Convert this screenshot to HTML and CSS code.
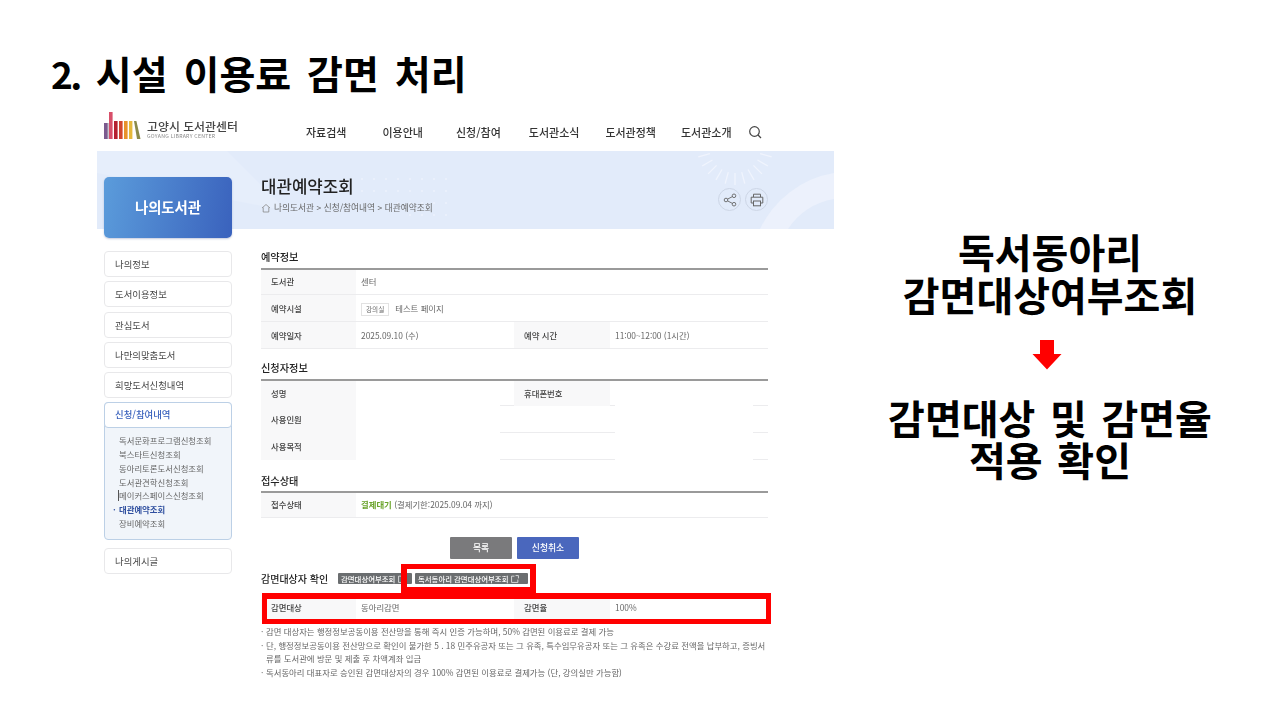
FILE: index.html
```html
<!DOCTYPE html>
<html lang="ko">
<head>
<meta charset="utf-8">
<title>시설 이용료 감면 처리</title>
<link rel="stylesheet" href="styles.css">
</head>
<body>
<div class="slide">
  <h1 class="slide-title"><span class="num">2.</span> 시설 이용료 감면 처리</h1>
  <div class="slide-main">
    <div class="shot">
      <div class="shot-inner">
        <header class="site-head">
          <div class="logo">
            <svg class="logo-mark" width="37" height="28" viewBox="0 0 37 28">
              <rect x="0" y="11" width="3" height="16" fill="#7b5a8f"/>
              <rect x="3" y="11" width="1.5" height="16" fill="#9a8aa5"/>
              <rect x="5" y="0" width="3.6" height="27" fill="#d8506a"/>
              <rect x="10" y="9" width="3.6" height="18" fill="#b5202f"/>
              <rect x="15" y="9" width="3.6" height="18" fill="#d2452f"/>
              <rect x="20" y="9" width="3.6" height="18" fill="#e8912c"/>
              <rect x="25" y="9" width="3.4" height="18" fill="#e6b93a"/>
              <polygon points="30,9 32.4,9 36.5,27 33,27" fill="#8a8a4a"/>
            </svg>
            <div class="logo-text">
              <div class="logo-ko">고양시 도서관센터</div>
              <div class="logo-en">GOYANG LIBRARY CENTER</div>
            </div>
          </div>
          <nav class="gnb">
            <span class="gnb-a">자료검색</span>
            <span class="gnb-b">이용안내</span>
            <span class="gnb-c">신청/참여</span>
            <span class="gnb-d">도서관소식</span>
            <span class="gnb-e">도서관정책</span>
            <span class="gnb-f">도서관소개</span>
            <svg class="gnb-search" width="14" height="14" viewBox="0 0 14 14" fill="none" stroke="#444" stroke-width="1.2"><circle cx="6.5" cy="6.5" r="4.8"/><path d="M10 10l3 3"/></svg>
          </nav>
        </header>

        <div class="banner">
          <svg class="banner-deco" width="737" height="78" viewBox="0 0 737 78">
            <polygon points="0,0 0,22 190,60 130,0" fill="#e6eefb"/>
            <g fill="#edf2fc">
              <circle cx="265" cy="28" r="1"/><circle cx="277" cy="28" r="1"/><circle cx="289" cy="28" r="1"/><circle cx="301" cy="28" r="1"/><circle cx="313" cy="28" r="1"/><circle cx="325" cy="28" r="1"/><circle cx="337" cy="28" r="1"/><circle cx="349" cy="28" r="1"/>
              <circle cx="265" cy="40" r="1"/><circle cx="277" cy="40" r="1"/><circle cx="289" cy="40" r="1"/><circle cx="301" cy="40" r="1"/><circle cx="313" cy="40" r="1"/><circle cx="325" cy="40" r="1"/><circle cx="337" cy="40" r="1"/><circle cx="349" cy="40" r="1"/>
              <circle cx="301" cy="52" r="1"/><circle cx="313" cy="52" r="1"/><circle cx="325" cy="52" r="1"/><circle cx="337" cy="52" r="1"/><circle cx="349" cy="52" r="1"/>
              <circle cx="313" cy="64" r="1"/><circle cx="325" cy="64" r="1"/><circle cx="337" cy="64" r="1"/><circle cx="349" cy="64" r="1"/>
            </g>
            <path stroke="#f0f4fd" stroke-width="1.3" d="M663.1 2.7L674.7 5.8M660.5 9L670.9 15M656.4 14.4L664.9 22.9M651 18.5L657 28.9M644.7 21.1L647.8 32.7M638 22L638 34M631.3 21.1L628.2 32.7M625 18.5L619 28.9M619.6 14.4L611.1 22.9M615.5 9L605.1 15M612.9 2.7L601.3 5.8"/>
            <path d="M737 22a100 100 0 0 0-74 56h28a70 70 0 0 1 46-30z" fill="#ecf1fc"/>
          </svg>
          <div class="banner-body">
            <h2 class="page-title">대관예약조회</h2>
            <div class="crumb">
              <svg width="10" height="10" viewBox="0 0 10 10" fill="none" stroke="#888" stroke-width=".8"><path d="M1 5l4-3.5L9 5M2.2 4.5V9h5.6V4.5"/></svg>
              <span>나의도서관 &gt; 신청/참여내역 &gt; 대관예약조회</span>
            </div>
          </div>
          <div class="banner-tools">
            <span class="tool">
              <svg width="14" height="14" viewBox="0 0 14 14" fill="none" stroke="#666" stroke-width=".9"><circle cx="3" cy="7" r="1.8"/><circle cx="11" cy="2.8" r="1.8"/><circle cx="11" cy="11.2" r="1.8"/><path d="M4.6 6.1l4.8-2.5M4.6 7.9l4.8 2.5"/></svg>
            </span>
            <span class="tool">
              <svg width="14" height="14" viewBox="0 0 14 14" fill="none" stroke="#666" stroke-width="1"><path d="M3.5 4V1.2h7V4M3.5 10H1.2V4.2h11.6V10h-2.3"/><rect x="3.5" y="8" width="7" height="4.8"/></svg>
            </span>
          </div>
        </div>

        <div class="site-body">
          <aside class="side">
            <div class="side-head">나의도서관</div>
            <ul class="side-menu">
              <li class="side-item">나의정보</li>
              <li class="side-item">도서이용정보</li>
              <li class="side-item">관심도서</li>
              <li class="side-item">나만의맞춤도서</li>
              <li class="side-item">희망도서신청내역</li>
              <li class="side-group">
                <div class="side-item is-open">신청/참여내역</div>
                <ul class="side-sub">
                  <li>독서문화프로그램신청조회</li>
                  <li>북스타트신청조회</li>
                  <li>동아리토론도서신청조회</li>
                  <li>도서관견학신청조회</li>
                  <li><span class="caret"></span>메이커스페이스신청조회</li>
                  <li class="is-current">대관예약조회</li>
                  <li>장비예약조회</li>
                </ul>
              </li>
              <li class="side-item">나의게시글</li>
            </ul>
          </aside>

          <main class="content">
            <h3 class="sec first">예약정보</h3>
            <div class="tbl">
              <div class="row"><div class="th">도서관</div><div class="td wide">센터</div></div>
              <div class="row"><div class="th">예약시설</div><div class="td wide"><span class="tag">강의실</span>테스트 페이지</div></div>
              <div class="row"><div class="th">예약일자</div><div class="td">2025.09.10 (수)</div><div class="th">예약 시간</div><div class="td">11:00~12:00 (1시간)</div></div>
            </div>

            <h3 class="sec">신청자정보</h3>
            <div class="tbl tbl-people">
              <div class="row"><div class="th">성명</div><div class="td"></div><div class="th">휴대폰번호</div><div class="td"></div></div>
              <div class="row"><div class="th">사용인원</div><div class="td wide"></div></div>
              <div class="row"><div class="th">사용목적</div><div class="td wide"></div></div>
              <div class="mask mask-a"></div>
              <div class="mask mask-b"></div>
            </div>

            <h3 class="sec third">접수상태</h3>
            <div class="tbl">
              <div class="row"><div class="th">접수상태</div><div class="td wide"><b class="ok">결제대기</b> (결제기한:2025.09.04 까지)</div></div>
            </div>

            <div class="btns">
              <span class="btn btn-gray">목록</span>
              <span class="btn btn-blue">신청취소</span>
            </div>

            <div class="check">
              <h3 class="check-title">감면대상자 확인</h3>
              <span class="badge badge-a">감면대상여부조회
                <svg width="8" height="8" viewBox="0 0 7 7" fill="none" stroke="#eee" stroke-width=".7"><path d="M3 1H.5v5.5H6V4M4 .5h2.5V3"/></svg>
              </span>
              <span class="badge badge-b">독서동아리 감면대상여부조회
                <svg width="8" height="8" viewBox="0 0 7 7" fill="none" stroke="#eee" stroke-width=".7"><path d="M3 1H.5v5.5H6V4M4 .5h2.5V3"/></svg>
              </span>
            </div>
            <div class="tbl tbl-plain">
              <div class="row"><div class="th">감면대상</div><div class="td">동아리감면</div><div class="th">감면율</div><div class="td">100%</div></div>
            </div>

            <ul class="notes">
              <li>감면 대상자는 행정정보공동이용 전산망을 통해 즉시 인증 가능하며, 50% 감면된 이용료로 결제 가능</li>
              <li>단, 행정정보공동이용 전산망으로 확인이 불가한 5 . 18 민주유공자 또는 그 유족, 특수임무유공자 또는 그 유족은 수강료 전액을 납부하고, 증빙서류를 도서관에 방문 및 제출 후 차액계좌 입금</li>
              <li>독서동아리 대표자로 승인된 감면대상자의 경우 100% 감면된 이용료로 결제가능 (단, 강의실만 가능함)</li>
            </ul>
          </main>
        </div>
      </div>
      <div class="red red-a"></div>
      <div class="red red-b"></div>
    </div>

    <aside class="callout">
      <p class="callout-text">독서동아리<br>감면대상여부조회</p>
      <svg class="callout-arrow" width="30" height="30" viewBox="0 0 30 30"><polygon points="8,0 22,0 22,14 29.5,14 15,29.5 .5,14 8,14" fill="#f00"/></svg>
      <p class="callout-text spaced">감면대상 및 감면율<br>적용 확인</p>
    </aside>
  </div>
</div>
</body>
</html>
```
FILE: styles.css
```css
* { box-sizing: border-box; }
html, body { margin: 0; padding: 0; background: #fff; }
body { font-family: "Noto Sans CJK KR", "Noto Sans", sans-serif; color: #000; }
ul { list-style: none; margin: 0; padding: 0; }
h1, h2, h3, p { margin: 0; }

.slide { width: 1280px; height: 720px; overflow: hidden; background: #fff; }
.slide-title {
  height: 105px; padding: 47px 0 0 51px;
  font-size: 39px; line-height: 50px; font-weight: 700; word-spacing: 5px; white-space: nowrap;
}
.num { letter-spacing: -2.5px; font-size: 37px; }
.slide-main { display: flex; padding-left: 97px; }

/* embedded screenshot */
.shot { position: relative; width: 737px; flex: none; }
.shot-inner { filter: blur(.35px); }

.site-head { height: 46px; display: flex; position: relative; }
.logo { width: 209px; padding: 7px 0 0 7px; display: flex; gap: 6px; flex: none; }
.logo-mark { flex: none; }
.logo-text { padding-top: 7px; }
.logo-ko { font-size: 11.9px; line-height: 14px; font-weight: 500; color: #444; white-space: nowrap; }
.logo-en { font-size: 5.2px; line-height: 6px; color: #888; letter-spacing: .25px; white-space: nowrap; }
.gnb { display: flex; align-items: center; padding-top: 8px; font-size: 11px; font-weight: 500; color: #333; white-space: nowrap; line-height: 38px; height: 46px; }
.gnb-b { margin-left: 36px; }
.gnb-c { margin-left: 33px; }
.gnb-d { margin-left: 28px; }
.gnb-e { margin-left: 26px; }
.gnb-f { margin-left: 25px; }
.gnb-search { margin-left: 16px; flex: none; }

.banner { position: relative; height: 78px; background: #e2ebfa; padding: 24px 0 0 164px; display: flex; }
.banner-deco { position: absolute; left: 0; top: 0; }
.banner-body { position: relative; flex: 1; }
.page-title { font-size: 16.8px; line-height: 22px; font-weight: 500; color: #222; }
.crumb { display: flex; align-items: center; gap: 3px; margin-top: 5px; font-size: 8.7px; line-height: 12px; color: #666; white-space: nowrap; }
.banner-tools { position: relative; display: flex; gap: 4px; padding: 13px 66px 0 0; }
.tool { width: 23px; height: 23px; border-radius: 50%; border: 1px solid #cdd6e6; display: flex; align-items: center; justify-content: center; }

.site-body { display: flex; }
.side { width: 128px; margin: -52px 0 0 7px; flex: none; position: relative; }
.side-head {
  height: 61px; border-radius: 5px; background: linear-gradient(100deg, #5b9cdb, #3a62bd);
  color: #fff; font-size: 14.4px; font-weight: 700; line-height: 60px; text-align: center;
  box-shadow: 0 1px 2px rgba(60,80,140,.3);
}
.side-menu { margin-top: 13px; }
.side-item {
  height: 26px; margin-bottom: 4.3px; border: 1px solid #e8e8ea; border-radius: 4px; background: #fff;
  padding-left: 10px; font-size: 9.4px; line-height: 24px; color: #444;
}
.side-group { border: 1px solid #bcd0e6; border-radius: 4px; background: #f1f5fa; margin-bottom: 8px; height: 137.5px; }
.side-item.is-open { margin: -1px -1px 0; height: 26px; border-color: #bcd0e6; color: #3a62bd; font-weight: 500; line-height: 23px; }
.side-sub { padding: 6px 0 0 14px; font-size: 8.4px; line-height: 13.7px; color: #666; white-space: nowrap; }
.is-current { color: #2f4f9f; font-weight: 700; position: relative; }
.is-current::before { content: "·"; position: absolute; left: -6px; }
.caret { display: inline-block; width: 1px; height: 11px; background: #555; margin: 0 0 -2px -1px; vertical-align: baseline; }

.content { width: 507px; margin-left: 29px; flex: none; }
.sec { font-size: 10.2px; line-height: 19px; font-weight: 500; color: #222; padding: 9px 0 2px; }
.sec.first { padding-top: 18px; }
.sec.third { padding: 10px 0 0; line-height: 21px; }

.tbl { position: relative; border-top: 2px solid #9a9a9a; font-size: 8.4px; color: #666; }
.row { display: grid; grid-template-columns: 95px 158px 96px 1fr; height: 27px; border-bottom: 1px solid #ececee; }
.row:first-child { height: 25px; }
.row:first-child .th, .row:first-child .td { line-height: 22px; }
.th { background: #f8f8f9; padding-left: 10px; line-height: 26px; color: #444; font-weight: 500; }
.td { padding-left: 5px; line-height: 26px; white-space: nowrap; }
.td.wide { grid-column: 2 / 5; }
.tbl-people .row .th { line-height: 27px; }
.tbl-people .row:first-child .th { line-height: 25px; }
.tag { display: inline-block; height: 13px; line-height: 11px; padding: 0 4px; margin-right: 6px; border: 1px solid #e2e2e2; font-size: 6.6px; vertical-align: 0; }
.ok { color: #6aa32a; font-weight: 700; }
.mask { position: absolute; top: 0; height: 79px; background: #fff; }
.mask-a { left: 95px; width: 144px; }
.mask-b { left: 354px; width: 138px; }

.btns { display: flex; justify-content: center; gap: 5px; margin-top: 19px; }
.btn { width: 62px; height: 22px; line-height: 21px; text-align: center; font-size: 8.8px; font-weight: 500; color: #fff; border-radius: 1px; }
.btn-gray { background: #7a7a7c; }
.btn-blue { background: #4a67bd; }

.check { display: flex; align-items: center; height: 15px; margin-top: 12px; }
.check-title { font-size: 10px; line-height: 15px; font-weight: 500; color: #222; width: 77px; white-space: nowrap; flex: none; }
.badge { height: 11px; line-height: 10px; background: #6b6e70; color: #fff; font-size: 7.4px; font-weight: 500; border-radius: 1px; padding-left: 3px; white-space: nowrap; display: flex; align-items: center; gap: 3px; }
.badge-a { width: 74px; margin-right: 3px; overflow: hidden; }
.badge-b { width: 113px; }

.tbl-plain { border-top: 0; margin-top: 13px; }
.tbl-plain .row, .tbl-plain .row:first-child { height: 21px; border-bottom: 0; }
.tbl-plain .row .th, .tbl-plain .row .td { line-height: 17px; }

.notes { margin-top: 5px; font-size: 8.4px; line-height: 13.7px; color: #666; }
.notes li { position: relative; padding-left: 5px; word-break: break-all; }
.notes li::before { content: "·"; position: absolute; left: 0; }

.red { position: absolute; border-style: solid; border-color: #f00; }
.red-a { left: 304px; top: 459px; width: 135px; height: 29px; border-width: 5px 6px 6px; }
.red-b { left: 165px; top: 488px; width: 509px; height: 31px; border-width: 6px 5px 5px; }

/* right-hand callout */
.callout { width: 340px; margin-left: 46px; padding-top: 125px; display: flex; flex-direction: column; align-items: center; flex: none; }
.callout-text { font-size: 40px; line-height: 43px; font-weight: 700; text-align: center; white-space: nowrap; }
.callout-text.spaced { word-spacing: 3.5px; line-height: 42px; margin-top: 26px; }
.callout-arrow { margin-top: 24px; display: block; margin-left: -6px; }
```
